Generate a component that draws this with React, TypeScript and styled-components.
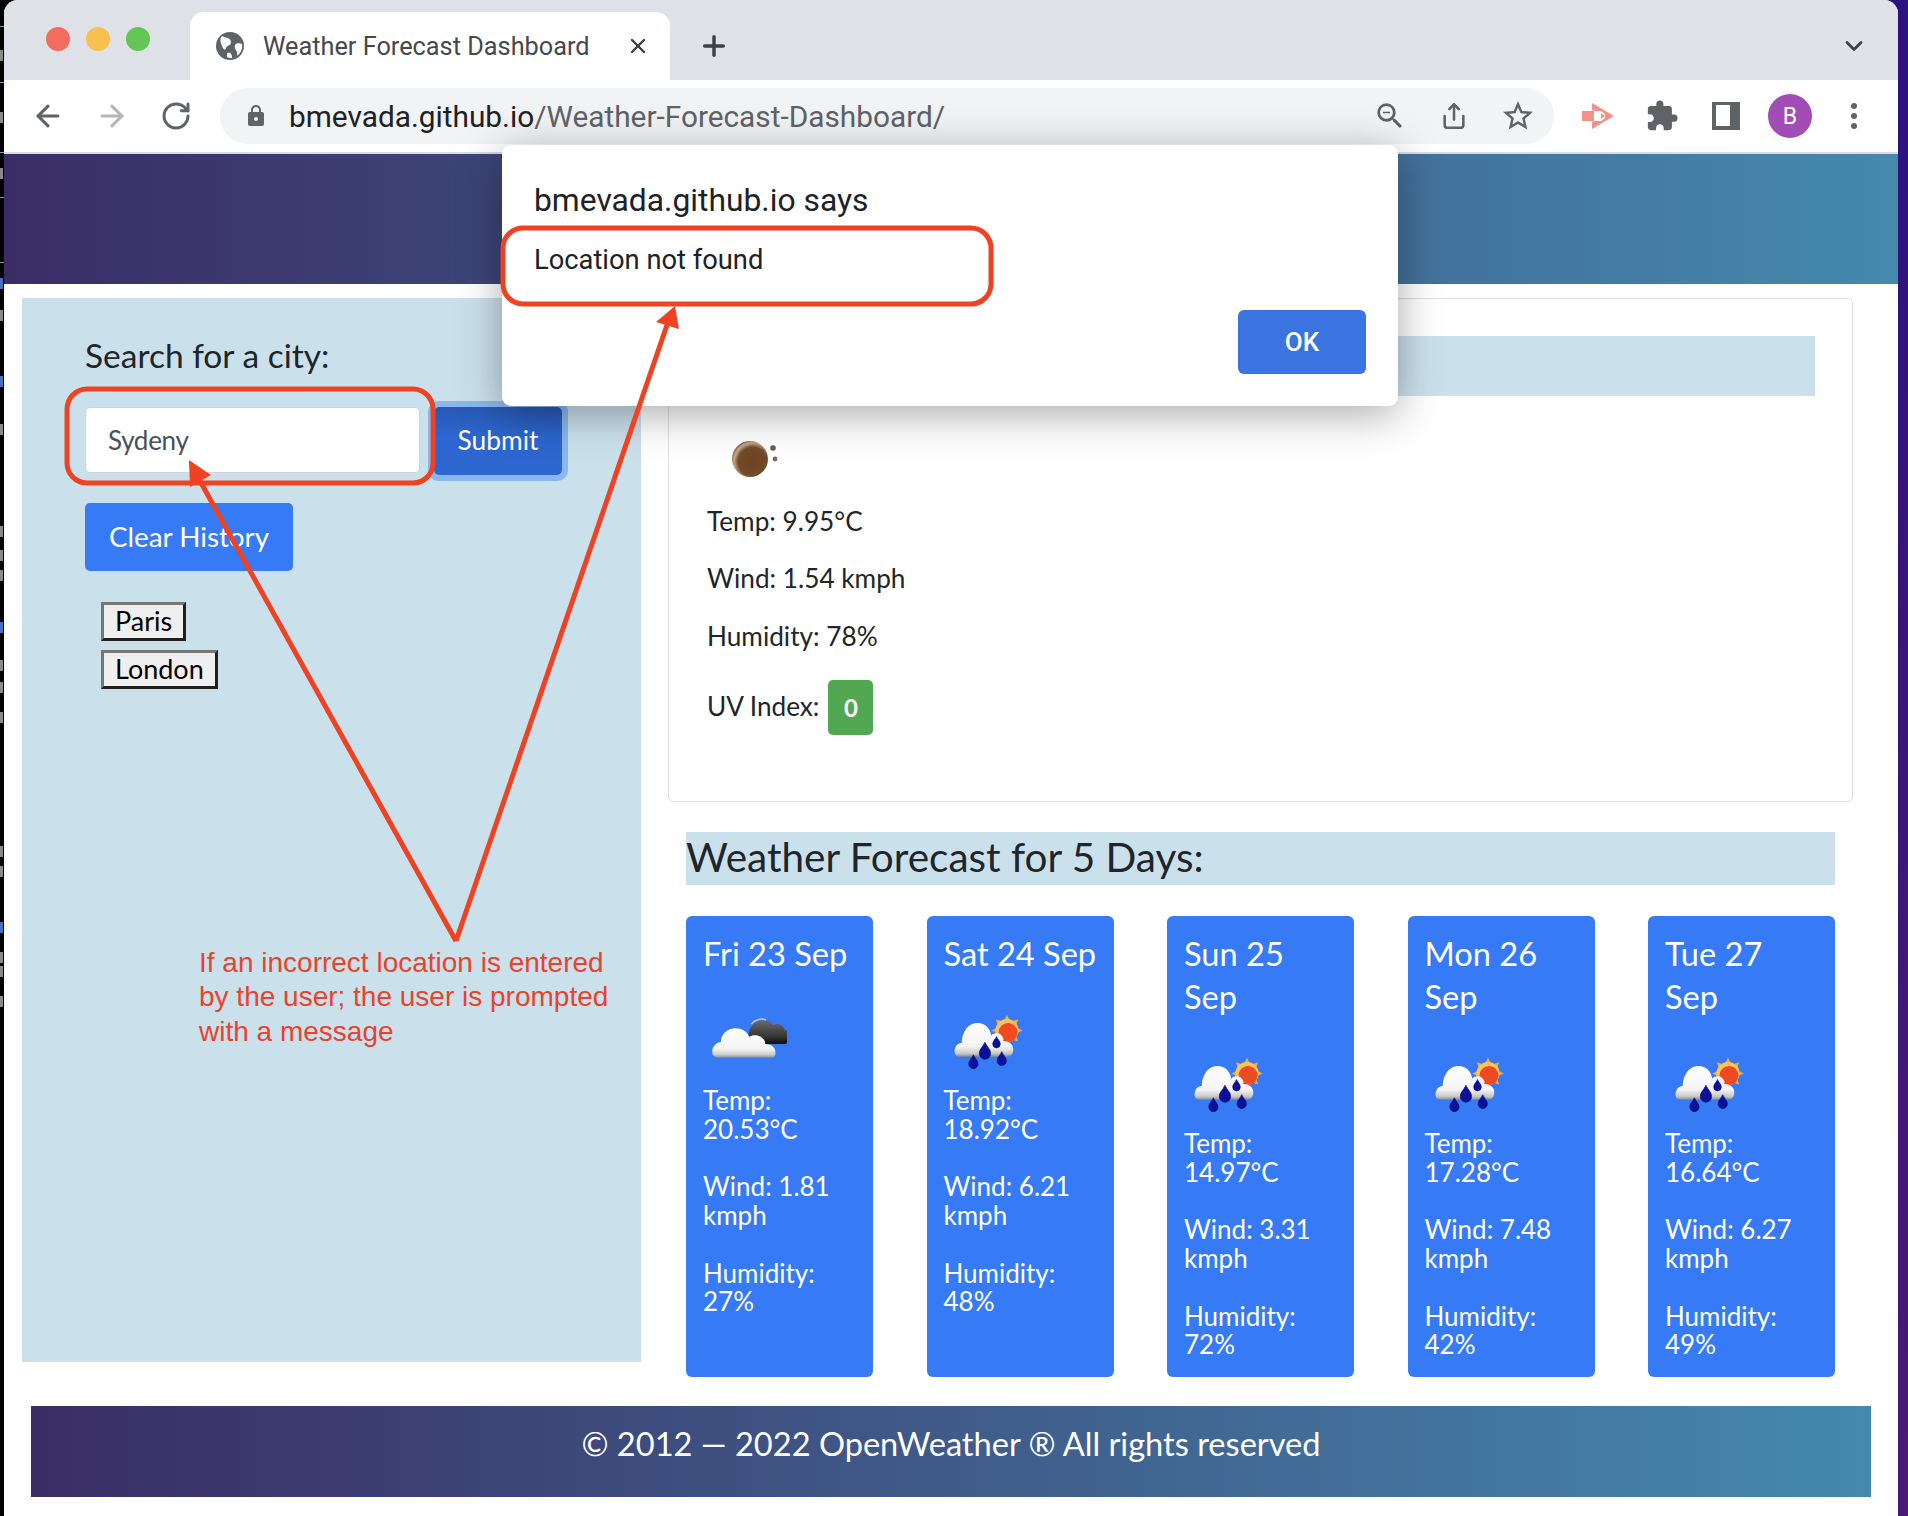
import styled, { createGlobalStyle } from 'styled-components'
import { ArrowLeft, ArrowRight, RotateCw, Share, Plus, X, ChevronDown } from 'lucide-react'
import { MdExtension, MdLock, MdStarBorder, MdZoomOut } from 'react-icons/md'

const GlobalStyle = createGlobalStyle`
  html, body {
    margin: 0;
    padding: 0;
    background: #000;
  }
  * {
    box-sizing: border-box;
  }
`;

const Desktop = styled.div`
  position: relative;
  width: 1908px;
  height: 1516px;
  overflow: hidden;
  padding: 0 10px 0 4px;
  background: linear-gradient(90deg, #000 50%, transparent 50%),
    linear-gradient(180deg, #2c1180, #4b1a74);
`;

// the window behind the browser peeks out on the left edge
const BackWindow = styled.div`
  position: absolute;
  left: 0;
  top: 0;
  width: 4px;
  height: 100%;
  overflow: hidden;
`;

const BackMark = styled.span<{ $top: number; $blue?: boolean }>`
  position: absolute;
  left: 0;
  top: ${(props) => props.$top}px;
  width: 3px;
  height: 11px;
  background: ${(props) => (props.$blue ? '#4a6fc0' : '#8a8a8a')};
`;

const BackRule = styled.span<{ $top: number }>`
  position: absolute;
  left: 0;
  top: ${(props) => props.$top}px;
  width: 4px;
  height: 1px;
  background: #6aa3bd;
`;

const Window = styled.div`
  height: 100%;
  background: #fff;
  border-radius: 14px 14px 0 0;
  overflow: hidden;
`;

const TabStrip = styled.div`
  height: 80px;
  background: #dee1e6;
  display: flex;
  align-items: flex-end;
  padding: 0 30px 0 42px;
  color: #3c4043;
`;

const Lights = styled.div`
  display: flex;
  gap: 16px;
  align-self: flex-start;
  margin-top: 27px;
`;

const Light = styled.span<{ $color: string }>`
  width: 24px;
  height: 24px;
  border-radius: 50%;
  background: ${(props) => props.$color};
`;

const Tab = styled.div`
  width: 480px;
  height: 68px;
  margin-left: 40px;
  padding: 0 20px 0 26px;
  background: #fff;
  border-radius: 14px 14px 0 0;
  display: flex;
  align-items: center;
  gap: 19px;
  font: 400 25.3px Roboto, sans-serif;
  color: #45484c;
`;

const TabTitle = styled.span`
  flex: 1;
  white-space: nowrap;
`;

const NewTab = styled.div`
  margin-left: 28px;
  height: 68px;
  display: flex;
  align-items: center;
`;

const TabMenu = styled.div`
  margin-left: auto;
  height: 68px;
  display: flex;
  align-items: center;
`;

const Toolbar = styled.div`
  height: 74px;
  background: #fff;
  border-bottom: 2px solid #dadce0;
  display: flex;
  align-items: center;
  padding-left: 12px;
`;

const Slot = styled.div<{ $dim?: boolean }>`
  width: 64px;
  height: 56px;
  flex: none;
  display: flex;
  align-items: center;
  justify-content: center;
  color: ${(props) => (props.$dim ? '#b4b6b9' : '#5f6368')};
`;

const Omnibox = styled.div`
  width: 1334px;
  height: 56px;
  margin: 0 12px;
  padding: 0 4px 0 24px;
  flex: none;
  border-radius: 28px;
  background: #f1f3f4;
  display: flex;
  align-items: center;
`;

const Url = styled.div`
  margin-left: 21px;
  flex: 1;
  font: 400 29.8px Roboto, sans-serif;
  color: #5f6368;
  white-space: nowrap;
  b {
    font-weight: 400;
    color: #202124;
  }
`;

const SidePanelIcon = styled.span`
  width: 28px;
  height: 28px;
  background: #fff;
  border-style: solid;
  border-color: #5f6368;
  border-width: 3px 10px 4px 4px;
`;

const Avatar = styled.span`
  width: 44px;
  height: 44px;
  border-radius: 50%;
  background: #a24db5;
  color: #fff;
  font: 400 23px Roboto, sans-serif;
  display: flex;
  align-items: center;
  justify-content: center;
`;

const Dots = styled.span`
  display: flex;
  flex-direction: column;
  gap: 4px;
  i {
    width: 6px;
    height: 6px;
    border-radius: 50%;
    background: #5f6368;
  }
`;

const SiteHeader = styled.header`
  height: 130px;
  background: linear-gradient(90deg, #3a2d66, #4589ad);
`;

const Main = styled.main`
  display: grid;
  grid-template-columns: 619px 1185px;
  column-gap: 27px;
  align-items: start;
  padding: 14px 0 0 18px;
  font-family: Lato, sans-serif;
  color: #212529;
`;

const Sidebar = styled.aside`
  height: 1064px;
  padding: 39px 0 0 63px;
  background: #cae1ec;
`;

const SearchLabel = styled.h2`
  margin: 0 0 33px;
  font: 400 33.5px/37px Lato, sans-serif;
  color: #212529;
`;

const SearchRow = styled.form`
  display: flex;
  align-items: flex-start;
  gap: 14px;
  height: 68px;
`;

const CityInput = styled.input`
  width: 335px;
  height: 66px;
  padding: 0 22px;
  border: 1px solid #ced4da;
  border-radius: 5px;
  background: #fff;
  font: 400 26px Lato, sans-serif;
  letter-spacing: -0.3px;
  color: #495057;
  outline: none;
`;

const SubmitButton = styled.button`
  width: 128px;
  height: 68px;
  padding: 0 0 2px;
  border: 0;
  border-radius: 5px;
  background: linear-gradient(180deg, #285ab4 0%, #2d66d0 45%);
  box-shadow: 0 0 0 6px #8ab8ee;
  color: #fff;
  font: 400 26.3px Lato, sans-serif;
`;

const ClearButton = styled.button`
  display: block;
  width: 208px;
  height: 68px;
  margin-top: 28px;
  padding: 0 0 2px;
  border: 0;
  border-radius: 5px;
  background: #377af5;
  color: #fff;
  font: 400 27.8px Lato, sans-serif;
`;

const HistoryList = styled.div`
  margin: 31px 0 0 16px;
  display: flex;
  flex-direction: column;
  align-items: flex-start;
  gap: 9px;
`;

const HistoryButton = styled.button`
  height: 39px;
  padding: 0 11px 2px;
  border: 3px solid;
  border-color: #767676 #1f1f1f #1f1f1f #767676;
  background: #efefef;
  color: #000;
  font: 400 27px/1 Lato, sans-serif;
`;

const Content = styled.section``;

const TodayCard = styled.div`
  height: 504px;
  padding: 37px 37px 0 38px;
  border: 1px solid #dfdfdf;
  border-radius: 5px;
`;

const TodayTitle = styled.div`
  height: 60px;
  margin-bottom: 33px;
  background: #cae1ec;
`;

const TodayLine = styled.p`
  margin: 0 0 25.4px;
  font: 400 26.2px/32px Lato, sans-serif;
`;

const UvLine = styled.p`
  margin: -1px 0 0;
  display: flex;
  align-items: center;
  gap: 9px;
  font: 400 26.2px/32px Lato, sans-serif;
`;

const UvBadge = styled.span`
  width: 45px;
  height: 55px;
  margin-top: 4px;
  border-radius: 5px;
  background: #52a752;
  color: #fff;
  font-size: 24px;
  font-weight: 700;
  display: flex;
  align-items: center;
  justify-content: center;
`;

const ForecastTitle = styled.h2`
  width: 1149px;
  height: 53px;
  margin: 30px 0 31px 18px;
  background: #cae1ec;
  font: 400 40.5px/49px Lato, sans-serif;
  color: #212529;
`;

const ForecastRow = styled.div`
  width: 1149px;
  margin-left: 18px;
  display: flex;
  justify-content: space-between;
`;

const DayCard = styled.article`
  width: 187px;
  height: 461px;
  padding: 16px 17px 0;
  border-radius: 6px;
  background: #377af5;
  color: #fff;
`;

const DayTitle = styled.h3`
  margin: 0 -5px 25px 0;
  font: 400 32.6px/43px Lato, sans-serif;
`;

const DayStat = styled.p`
  margin: 8px 0 29.4px;
  font: 400 26px/28.5px Lato, sans-serif;
  &:last-child {
    margin-bottom: 0;
  }
`;

const IconBox = styled.div`
  height: 80px;
  margin-bottom: -2px;
  svg {
    display: block;
  }
`;

const TodayIcon = styled(IconBox)`
  margin-bottom: -4px;
`;

const Footer = styled.footer`
  width: 1840px;
  height: 91px;
  margin: 29px 0 0 27px;
  background: linear-gradient(90deg, #3a2d66, #4589ad);
  color: #fff;
  font: 400 32.6px/76px Lato, sans-serif;
  text-align: center;
`;

const Dialog = styled.div`
  position: absolute;
  left: 502px;
  top: 145px;
  width: 896px;
  height: 261px;
  padding: 36px 32px 0;
  background: #fff;
  border-radius: 9px;
  box-shadow: 0 8px 44px rgba(0, 0, 0, 0.34);
  font-family: Roboto, sans-serif;
  color: #202124;
`;

const DialogTitle = styled.div`
  font-size: 31.8px;
  line-height: 38px;
`;

const DialogMessage = styled.div`
  margin-top: 22px;
  font-size: 27.3px;
  line-height: 38px;
`;

const OkButton = styled.button`
  position: absolute;
  right: 32px;
  bottom: 32px;
  width: 128px;
  height: 64px;
  border: 0;
  border-radius: 6px;
  background: #3b73e0;
  color: #fff;
  font: 500 26px Roboto, sans-serif;
`;

const MarkupLayer = styled.svg`
  position: absolute;
  left: 0;
  top: 0;
  pointer-events: none;
`;

const Note = styled.div`
  position: absolute;
  left: 199px;
  top: 945.5px;
  width: 440px;
  font: 400 28px/34.5px "Liberation Sans", Arial, sans-serif;
  color: #e8432d;
`;

function TabGlobe() {
  return (
    <svg width="28" height="28" viewBox="0 0 28 28" style={{ flex: 'none' }}>
      <circle cx="14" cy="14" r="14" fill="#5f6368" />
      <path d="M6 4c4 2 9 2 9 6s-4 3-5 6-3 1-4-2-3-6 0-10zM26 12c-5-2-8 0-7 4s3 3 2 8c3-2 6-7 5-12zM11 21c3-1 5 0 5 5-2 0-4 0-5-1z" fill="#fff" />
    </svg>
  )
}

function CastLogo() {
  return (
    <svg width="32" height="26" viewBox="0 0 32 26">
      <path d="M10 0l22 13-22 13v-7l6-3V10l-6-3z" fill="#f48f8a" />
      <path d="M0 8h12v10H0z" fill="#f48f8a" />
      <path d="M12 8h7l4 3v4l-4 3h-7z" fill="#fff" />
      <path d="M19 10l4 3-4 3z" fill="#f48f8a" />
    </svg>
  )
}

function PlanetIcon() {
  return (
    <svg width="80" height="60" viewBox="0 0 80 60">
      <defs>
        <radialGradient id="planet" cx="58%" cy="58%" r="60%">
          <stop offset="0%" stopColor="#6b4322" />
          <stop offset="68%" stopColor="#744b2a" />
          <stop offset="88%" stopColor="#c9a98c" />
          <stop offset="100%" stopColor="#8c6a4d" />
        </radialGradient>
      </defs>
      <circle cx="43" cy="30" r="18" fill="url(#planet)" />
      <circle cx="66" cy="19" r="2.8" fill="#6d5a4a" />
      <circle cx="68" cy="30" r="2.4" fill="#7c6a5a" />
    </svg>
  )
}

function CloudDefs() {
  return (
    <defs>
      <linearGradient id="whiteCloud" x1="0" y1="0" x2="0" y2="1">
        <stop offset="0%" stopColor="#fff" />
        <stop offset="70%" stopColor="#f4f4f4" />
        <stop offset="90%" stopColor="#c9c9c9" />
        <stop offset="100%" stopColor="#8a8a8a" />
      </linearGradient>
      <linearGradient id="darkCloud" x1="0" y1="0" x2="0" y2="1">
        <stop offset="0%" stopColor="#6b6b6b" />
        <stop offset="70%" stopColor="#333" />
        <stop offset="100%" stopColor="#0c0c0c" />
      </linearGradient>
    </defs>
  )
}

function CloudsIcon() {
  return (
    <svg width="84" height="84" viewBox="0 3 80 80">
      <CloudDefs />
      <path d="M44 42c-2-6 0-16 9-19 6-2 12 1 14 4 4-3 10 0 11 5 4-1 7 3 6 7s-4 6-8 6H50z" fill="url(#darkCloud)" />
      <path d="M46 26c3-4 9-6 14-4" fill="none" stroke="#c4c4c4" strokeWidth="1.4" />
      <path d="M15 58c-5 0-7-4-6-8s5-7 8-7c0-7 6-13 14-13 6 0 11 3 13 8 3-2 8-2 11 0s5 5 4 7c6 0 10 3 10 8 0 3-1 5-4 5z" fill="url(#whiteCloud)" />
    </svg>
  )
}

function Drop({ x, y, r }: { x: number; y: number; r: number }) {
  return (
    <path
      d={`M${x} ${y - r * 2}c${r * 0.4} ${r * 0.9} ${r} ${r * 1.2} ${r} ${r * 2}a${r} ${r} 0 1 1-${r * 2} 0c0-${r * 0.8} ${r * 0.6}-${r * 1.1} ${r}-${r * 2}z`}
      fill="#0a0f9c"
      stroke="#08105e"
      strokeWidth="0.6"
    />
  )
}

const sunRays = [0, 45, 90, 135, 180, 225, 270, 315]

function RainIcon() {
  return (
    <svg width="84" height="84" viewBox="0 0 80 80">
      <CloudDefs />
      {sunRays.map((deg) => (
        <path key={deg} d="M60 14l3 6h-6z" fill="#f2a93b" transform={`rotate(${deg} 60 29)`} />
      ))}
      <circle cx="60" cy="29" r="11" fill="#f9c35a" />
      <circle cx="61" cy="31" r="9" fill="#ee4b22" />
      <path d="M15 54c-5 0-6-5-4-9 1-3 4-4 6-4 0-9 5-19 15-19 7 0 12 5 13 12 2-3 8-3 10 0 2 2 2 4 1 5 6 0 10 3 10 8s-3 7-6 7z" fill="url(#whiteCloud)" />
      <Drop x={28} y={61} r={4.4} />
      <Drop x={39} y={51} r={5.4} />
      <Drop x={55} y={58} r={4.4} />
      <Drop x={50} y={42} r={3.6} />
    </svg>
  )
}

const days = [
  { date: 'Fri 23 Sep', icon: 'clouds', temp: '20.53°C', wind: '1.81', humidity: '27%' },
  { date: 'Sat 24 Sep', icon: 'rain', temp: '18.92°C', wind: '6.21', humidity: '48%' },
  { date: 'Sun 25 Sep', icon: 'rain', temp: '14.97°C', wind: '3.31', humidity: '72%' },
  { date: 'Mon 26 Sep', icon: 'rain', temp: '17.28°C', wind: '7.48', humidity: '42%' },
  { date: 'Tue 27 Sep', icon: 'rain', temp: '16.64°C', wind: '6.27', humidity: '49%' },
]

const backMarks = [
  { top: 50 },
  { top: 112 },
  { top: 168 },
  { top: 278, blue: true },
  { top: 310 },
  { top: 376, blue: true },
  { top: 424 },
  { top: 526 },
  { top: 550 },
  { top: 570 },
  { top: 622, blue: true },
  { top: 660 },
  { top: 682 },
  { top: 712 },
  { top: 846 },
  { top: 866 },
  { top: 922, blue: true },
  { top: 952 },
  { top: 966 },
  { top: 996 },
]

const backRules = [26, 82, 152, 197, 262]

function App() {
  return (
    <>
      <GlobalStyle />
      <Desktop>
        <BackWindow>
          {backRules.map((top) => (
            <BackRule key={top} $top={top} />
          ))}
          {backMarks.map((mark) => (
            <BackMark key={mark.top} $top={mark.top} $blue={mark.blue} />
          ))}
        </BackWindow>
        <Window>
          <TabStrip>
            <Lights>
              <Light $color="#f26d5f" />
              <Light $color="#f7c04f" />
              <Light $color="#62c554" />
            </Lights>
            <Tab>
              <TabGlobe />
              <TabTitle>Weather Forecast Dashboard</TabTitle>
              <X size={24} color="#3c4043" strokeWidth={2.4} />
            </Tab>
            <NewTab>
              <Plus size={32} color="#3c4043" strokeWidth={2.6} />
            </NewTab>
            <TabMenu>
              <ChevronDown size={28} color="#3c4043" strokeWidth={2.4} />
            </TabMenu>
          </TabStrip>
          <Toolbar>
            <Slot><ArrowLeft size={34} strokeWidth={2.2} /></Slot>
            <Slot $dim><ArrowRight size={34} strokeWidth={2.2} /></Slot>
            <Slot><RotateCw size={32} strokeWidth={2.2} /></Slot>
            <Omnibox>
              <MdLock size={24} color="#5f6368" />
              <Url><b>bmevada.github.io</b>/Weather-Forecast-Dashboard/</Url>
              <Slot><MdZoomOut size={34} /></Slot>
              <Slot><Share size={28} strokeWidth={2.2} /></Slot>
              <Slot><MdStarBorder size={36} /></Slot>
            </Omnibox>
            <Slot><CastLogo /></Slot>
            <Slot><MdExtension size={34} /></Slot>
            <Slot><SidePanelIcon /></Slot>
            <Slot><Avatar>B</Avatar></Slot>
            <Slot><Dots><i /><i /><i /></Dots></Slot>
          </Toolbar>
          <SiteHeader />
          <Main>
            <Sidebar>
              <SearchLabel>Search for a city:</SearchLabel>
              <SearchRow>
                <CityInput value="Sydeny" readOnly />
                <SubmitButton type="button">Submit</SubmitButton>
              </SearchRow>
              <ClearButton type="button">Clear History</ClearButton>
              <HistoryList>
                <HistoryButton type="button">Paris</HistoryButton>
                <HistoryButton type="button">London</HistoryButton>
              </HistoryList>
            </Sidebar>
            <Content>
              <TodayCard>
                <TodayTitle />
                <TodayIcon><PlanetIcon /></TodayIcon>
                <TodayLine>Temp: 9.95°C</TodayLine>
                <TodayLine>Wind: 1.54 kmph</TodayLine>
                <TodayLine>Humidity: 78%</TodayLine>
                <UvLine>UV Index: <UvBadge>0</UvBadge></UvLine>
              </TodayCard>
              <ForecastTitle>Weather Forecast for 5 Days:</ForecastTitle>
              <ForecastRow>
                {days.map((day) => (
                  <DayCard key={day.date}>
                    <DayTitle>{day.date}</DayTitle>
                    <IconBox>{day.icon === 'rain' ? <RainIcon /> : <CloudsIcon />}</IconBox>
                    <DayStat>Temp: {day.temp}</DayStat>
                    <DayStat>Wind: {day.wind} kmph</DayStat>
                    <DayStat>Humidity: {day.humidity}</DayStat>
                  </DayCard>
                ))}
              </ForecastRow>
            </Content>
          </Main>
          <Footer>© 2012 — 2022 OpenWeather ® All rights reserved</Footer>
        </Window>
        <Dialog>
          <DialogTitle>bmevada.github.io says</DialogTitle>
          <DialogMessage>Location not found</DialogMessage>
          <OkButton type="button">OK</OkButton>
        </Dialog>
        <Note>If an incorrect location is entered by the user; the user is prompted with a message</Note>
        <MarkupLayer width="1908" height="1516" viewBox="0 0 1908 1516" fill="none">
          <rect x="67" y="389" width="366" height="94" rx="20" stroke="#ee4223" strokeWidth="5" />
          <rect x="503" y="228" width="488" height="76" rx="20" stroke="#ee4223" strokeWidth="5" />
          <path d="M456 941L200 481M456 941L667 325" stroke="#ee4223" strokeWidth="5" />
          <path d="M189 460L211 475L190 487z" fill="#ee4223" />
          <path d="M675 306L656 322L679 329z" fill="#ee4223" />
        </MarkupLayer>
      </Desktop>
    </>
  )
}

export default App
